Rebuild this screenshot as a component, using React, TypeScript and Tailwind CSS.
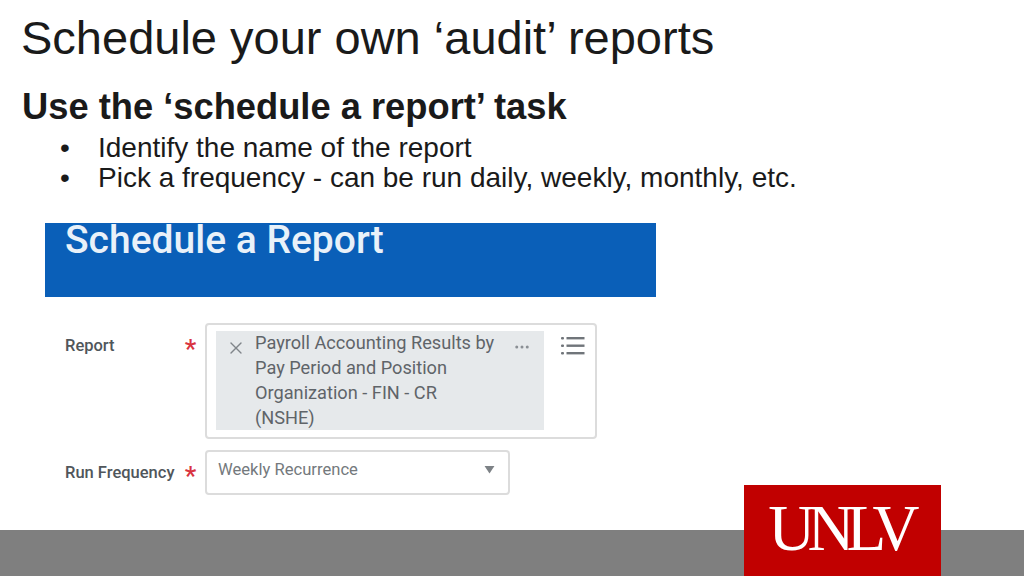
import { X, MoreHorizontal } from 'lucide-react';

function Star() {
  return <span className="ml-[-2px] mt-[-4px] h-[14px] w-[15px] text-center text-[26px] font-medium leading-[25px] text-[#d9333f]">*</span>;
}

export default function App() {
  return (
    <div className="relative flex h-[576px] w-[1024px] flex-col overflow-hidden bg-white font-['Liberation_Sans',Arial,sans-serif] text-[#1a1a1a]">
      <h1 className="ml-[21px] mt-[13px] text-[47px] leading-[50px]">Schedule your own ‘audit’ reports</h1>
      <h2 className="ml-[22px] mt-[24px] text-[36.3px] font-bold leading-[40px]">Use the ‘schedule a report’ task</h2>
      <ul className="ml-[60px] mt-[6px] text-[28px] leading-[30px]">
        <li className="flex"><span className="w-[38px]">•</span>Identify the name of the report</li>
        <li className="flex"><span className="w-[38px]">•</span>Pick a frequency - can be run daily, weekly, monthly, etc.</li>
      </ul>

      {/* screenshot of the task */}
      <div className="ml-[45px] mt-[30px] w-[611px] font-['Roboto',sans-serif]">
        <div className="h-[74px] bg-[#0a5fb8] pl-[20px] text-[39px] font-medium leading-[34px] text-[#e9f1f9]">Schedule a Report</div>

        <div className="mt-[26px] flex items-start">
          <div className="flex w-[160px] items-center pl-[20px] pt-[13px] text-[16.5px] font-medium leading-[20px] text-[#50565b]">
            <span className="w-[120px]">Report</span>
            <Star />
          </div>
          <div className="flex h-[116px] w-[392px] items-start rounded-[4px] border-2 border-[#dcdcdc] pl-[9px] pt-[6px]">
            <div className="flex h-[99px] w-[328px] bg-[#e6e9eb] text-[#5f6469]">
              <X size={20} strokeWidth={1.6} className="ml-[10px] mt-[7px] text-[#80858a]" />
              <div className="ml-[9px] mt-[-1px] w-[258px] whitespace-nowrap text-[18.2px] leading-[25px]">
                <div>Payroll Accounting Results by</div>
                <div>Pay Period and Position</div>
                <div>Organization - FIN - CR</div>
                <div>(NSHE)</div>
              </div>
              <MoreHorizontal size={18} strokeWidth={2} className="mt-[7px] text-[#8a8f94]" />
            </div>
            <svg width="24" height="20" viewBox="0 0 24 20" className="ml-[17px] mt-[5px] text-[#70757a]">
              <g fill="currentColor">
                <rect x="0" y="1" width="3" height="2.4" rx="1" />
                <rect x="5.5" y="1" width="18" height="2.4" />
                <rect x="0" y="8.5" width="3" height="2.4" rx="1" />
                <rect x="5.5" y="8.5" width="18" height="2.4" />
                <rect x="0" y="16" width="3" height="2.4" rx="1" />
                <rect x="5.5" y="16" width="18" height="2.4" />
              </g>
            </svg>
          </div>
        </div>

        <div className="mt-[11px] flex items-start">
          <div className="flex w-[160px] items-center pl-[20px] pt-[13px] text-[16.5px] font-medium leading-[20px] text-[#50565b]">
            <span className="w-[120px] whitespace-nowrap">Run Frequency</span>
            <Star />
          </div>
          <div className="flex h-[45px] w-[305px] items-start justify-between rounded-[4px] border-2 border-[#dcdcdc] pl-[11px] pr-[13px] pt-[6px] text-[16.6px] leading-[24px] text-[#74797d]">
            <span>Weekly Recurrence</span>
            <svg width="11" height="9" viewBox="0 0 12 10" className="mt-[7px]">
              <path d="M0.5 1h11L6 9.5z" fill="#7d8286" />
            </svg>
          </div>
        </div>
      </div>

      <div className="mt-auto h-[46px] bg-[#7f7f7f]" />
      <div className="absolute left-[744px] top-[485px] flex h-[91px] w-[197px] justify-center bg-[#c10000] pr-[5px] pt-[8px] font-['Liberation_Serif',serif] text-[65px] leading-[70px] tracking-[-0.12em] text-white">
        UNLV
      </div>
    </div>
  );
}
